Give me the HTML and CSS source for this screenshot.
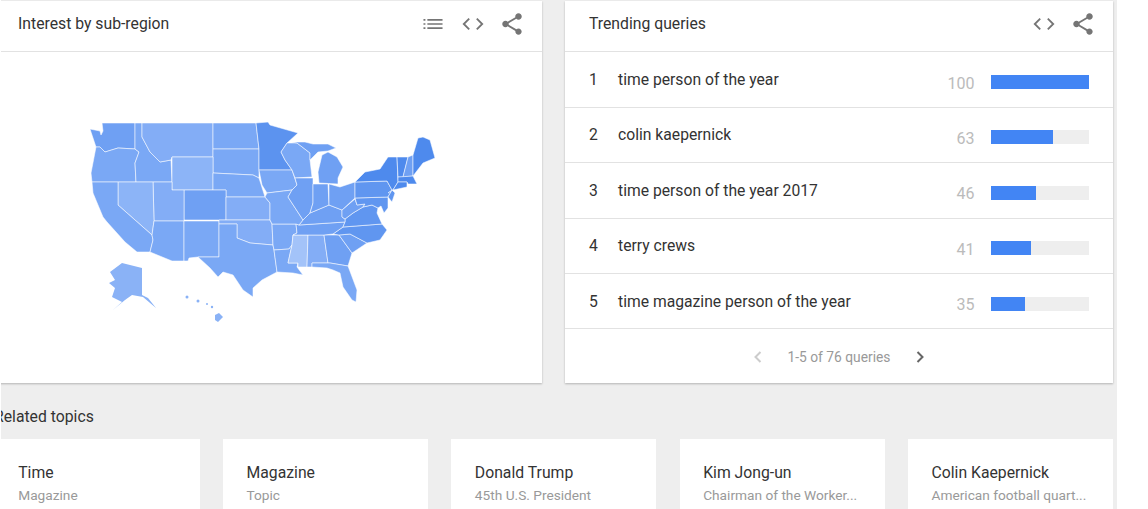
FILE: index.html
```html
<!DOCTYPE html>
<html lang="en">
<head>
<meta charset="utf-8">
<title>Interest by sub-region</title>
<link rel="stylesheet" href="styles.css">
</head>
<body>
<main class="page">
<div class="inner">
  <section class="panels">
    <article class="card">
      <header class="card-head">
        <h2 class="card-title">Interest by sub-region</h2>
        <svg class="icon" viewBox="0 0 24 24"><path d="M3.2 7.3h1.8v1.6H3.2zM6.8 7.3h14v1.6h-14zM3.2 11.2h1.8v1.6H3.2zM6.8 11.2h14v1.6h-14zM3.2 15.1h1.8v1.6H3.2zM6.8 15.1h14v1.6h-14z"/></svg>
        <svg class="icon" viewBox="0 0 24 24"><path class="line" d="M8.5 7 3.5 12l5 5M15.5 7l5 5-5 5"/></svg>
        <svg class="icon" viewBox="0 0 24 24"><path d="M18 16.08c-.76 0-1.44.3-1.96.77L8.91 12.7c.05-.23.09-.46.09-.7s-.04-.47-.09-.7l7.05-4.11c.54.5 1.25.81 2.04.81 1.66 0 3-1.34 3-3s-1.34-3-3-3-3 1.34-3 3c0 .24.04.47.09.7L8.04 9.81C7.5 9.31 6.79 9 6 9c-1.66 0-3 1.34-3 3s1.34 3 3 3c.79 0 1.5-.31 2.04-.81l7.12 4.16c-.05.21-.08.43-.08.65 0 1.61 1.31 2.92 2.92 2.92s2.92-1.31 2.92-2.92-1.31-2.92-2.92-2.92z"/></svg>
      </header>
      <svg class="map" viewBox="85 115 360 215" role="img" aria-label="Map of the United States">
        <g class="states">
          <polygon class="c3" points="90,129 100,131 101,135 103,131 102,123 135,123 135,149 118,148 105,152 100,147 96,147 93,138"/>
          <polygon class="c2" points="96,147 100,147 105,152 118,148 135,149 139,152 135,163 136,182 92,182 91,173"/>
          <polygon class="c2" points="135,123 142,123 142,137 150,152 160,162 171,160 172,182 136,182 135,163 139,152 135,149"/>
          <polygon class="c1" points="142,123 213,123 213,157 172,157 171,160 160,162 150,152 142,137"/>
          <polygon class="c2" points="213,123 256,123 259,149 213,149"/>
          <polygon class="c2" points="213,149 259,149 259,178 253,175 213,173"/>
          <polygon class="c0" points="172,157 213,157 213,190 172,190"/>
          <polygon class="c2" points="213,173 253,175 259,178 265,197 226,197 226,190 213,190"/>
          <polygon class="c3" points="184,190 226,190 226,220 184,220"/>
          <polygon class="c1" points="226,197 265,197 270,203 270,220 226,220"/>
          <polygon class="c1" points="153,182 172,182 172,190 184,190 184,221 154,221"/>
          <polygon class="c0" points="118,182 153,182 154,221 152,235 118,205"/>
          <polygon class="c2" points="92,182 118,182 118,205 152,235 153,240 150,252 137,252 125,242 107,222 103,217 93,193"/>
          <polygon class="c2" points="154,221 184,221 184,261 172,261 150,252 153,240 152,235"/>
          <polygon class="c2" points="184,221 219,221 219,257 198,257 189,258 188,261 184,261"/>
          <polygon class="c1" points="219,220 270,220 272,224 273,245 250,243 237,238 237,224 219,224"/>
          <polygon class="c2" points="219,224 237,224 237,238 250,243 273,245 274,250 277,272 262,280 253,288 253,297 243,290 233,275 223,272 218,277 210,268 198,257 219,257"/>
          <polygon class="c2" points="272,224 296,224 297,233 293,235 292,245 289,249 274,250 273,245"/>
          <polygon class="c2" points="274,250 289,249 292,245 288,263 298,263 297,267 303,275 293,273 277,272"/>
          <polygon class="c0b" points="293,235 308,235 307,267 298,267 298,263 288,263 292,245"/>
          <polygon class="c1" points="308,235 324,235 328,263 312,263 312,267 307,267"/>
          <polygon class="c3" points="324,235 339,235 352,253 348,266 330,263 328,263"/>
          <polygon class="c2" points="312,263 328,263 330,263 348,266 357,290 356,302 352,300 343,287 340,273 333,270 327,268 312,267"/>
          <polygon class="c3" points="339,235 350,234 367,243 352,253"/>
          <polygon class="c4" points="333,234 343,227 382,224 387,230 380,240 367,243 350,234 339,235"/>
          <polygon class="c3" points="296,224 299,225 345,222 343,227 333,234 324,235 293,235 297,233"/>
          <polygon class="c4" points="345,222 345,219 353,213 363,207 372,205 378,208 377,213 382,224 343,227"/>
          <polygon class="c3" points="299,225 303,220 310,213 329,205 342,210 342,217 345,219 345,222"/>
          <polygon class="c3" points="342,210 355,199 357,205 365,204 363,207 353,213 345,219 342,217"/>
          <polygon class="c4" points="355,198 388,197 388,208 384,213 381,206 378,208 372,205 363,207 365,204 357,205"/>
          <polygon class="c4b" points="256,123 268,122 270,125 298,133 287,143 281,152 285,160 292,170 259,170 259,149"/>
          <polygon class="c2" points="259,170 292,170 297,185 292,190 267,193 262,185"/>
          <polygon class="c2" points="265,197 267,193 292,190 288,197 303,220 299,225 296,224 272,224 270,220 270,203"/>
          <polygon class="c2" points="287,143 297,143 310,153 310,160 312,177 295,178 292,170 285,160 281,152"/>
          <polygon class="c3" points="292,142 305,142 313,144 328,144 336,148 328,151 318,152 310,160 310,153 297,143"/>
          <polygon class="c3" points="319,183 318,172 322,155 328,152 337,157 343,167 338,178 338,184"/>
          <polygon class="c3" points="295,178 313,178 313,203 310,213 303,220 288,197 292,190 297,185"/>
          <polygon class="c3" points="313,184 328,184 329,205 310,213 313,203"/>
          <polygon class="c3" points="329,184 340,187 355,182 355,198 342,210 329,205"/>
          <polygon class="c4" points="355,182 387,181 392,190 388,197 355,198"/>
          <polygon class="c5" points="355,182 365,172 380,169 388,157 397,157 398,182 393,190 397,187 388,193 392,190 387,181"/>
          <polygon class="c5" points="397,157 408,157 403,177 398,177"/>
          <polygon class="c3" points="408,157 413,155 413,176 403,177"/>
          <polygon class="c5" points="413,155 418,138 423,137 430,140 435,158 423,163 413,176"/>
          <polygon class="c5" points="398,177 413,176 417,184 408,184 407,182 398,182"/>
          <polygon class="c5" points="398,182 407,182 407,187 393,190"/>
          <polygon class="c4" points="392,190 395,193 392,202 388,197"/>
        </g>
        <g class="islands">
          <polygon points="122,263 142,268 142,295 148,298 156,308 143,297 132,295 125,300 113,310 122,302 112,297 115,288 109,283 115,280 110,272"/>
          <polygon points="215,315 219,313 223,317 218,322 215,320"/>
          <circle cx="187" cy="297" r="1.5"/>
          <circle cx="198" cy="301" r="1.5"/>
          <circle cx="207" cy="304" r="1"/>
          <circle cx="212" cy="307" r="1.2"/>
        </g>
      </svg>
    </article>

    <article class="card">
      <header class="card-head">
        <h2 class="card-title">Trending queries</h2>
        <svg class="icon" viewBox="0 0 24 24"><path class="line" d="M8.5 7 3.5 12l5 5M15.5 7l5 5-5 5"/></svg>
        <svg class="icon" viewBox="0 0 24 24"><path d="M18 16.08c-.76 0-1.44.3-1.96.77L8.91 12.7c.05-.23.09-.46.09-.7s-.04-.47-.09-.7l7.05-4.11c.54.5 1.25.81 2.04.81 1.66 0 3-1.34 3-3s-1.34-3-3-3-3 1.34-3 3c0 .24.04.47.09.7L8.04 9.81C7.5 9.31 6.79 9 6 9c-1.66 0-3 1.34-3 3s1.34 3 3 3c.79 0 1.5-.31 2.04-.81l7.12 4.16c-.05.21-.08.43-.08.65 0 1.61 1.31 2.92 2.92 2.92s2.92-1.31 2.92-2.92-1.31-2.92-2.92-2.92z"/></svg>
      </header>
      <ol class="rows">
        <li class="row"><span class="rank">1</span><span class="query">time person of the year</span><span class="value">100</span><span class="bar"><span class="fill" style="width:100%"></span></span></li>
        <li class="row"><span class="rank">2</span><span class="query">colin kaepernick</span><span class="value">63</span><span class="bar"><span class="fill" style="width:63%"></span></span></li>
        <li class="row"><span class="rank">3</span><span class="query">time person of the year 2017</span><span class="value">46</span><span class="bar"><span class="fill" style="width:46%"></span></span></li>
        <li class="row"><span class="rank">4</span><span class="query">terry crews</span><span class="value">41</span><span class="bar"><span class="fill" style="width:41%"></span></span></li>
        <li class="row"><span class="rank">5</span><span class="query">time magazine person of the year</span><span class="value">35</span><span class="bar"><span class="fill" style="width:35%"></span></span></li>
      </ol>
      <footer class="pager">
        <svg class="chev chev-off" viewBox="0 0 10 14"><path d="M7.5 2 2.5 7l5 5"/></svg>
        <span class="pager-text">1-5 of 76 queries</span>
        <svg class="chev" viewBox="0 0 10 14"><path d="M2.5 2l5 5-5 5"/></svg>
      </footer>
    </article>
  </section>

  <h2 class="section-title">Related topics</h2>
  <section class="topics">
    <article class="topic"><div class="topic-name">Time</div><div class="topic-sub">Magazine</div></article>
    <article class="topic"><div class="topic-name">Magazine</div><div class="topic-sub">Topic</div></article>
    <article class="topic"><div class="topic-name">Donald Trump</div><div class="topic-sub">45th U.S. President</div></article>
    <article class="topic"><div class="topic-name">Kim Jong-un</div><div class="topic-sub">Chairman of the Worker...</div></article>
    <article class="topic"><div class="topic-name">Colin Kaepernick</div><div class="topic-sub">American football quart...</div></article>
  </section>
</div>
</main>
</body>
</html>
```
FILE: styles.css
```css
* { box-sizing: border-box; }
html, body { margin: 0; padding: 0; height: 100%; background: #fff; overflow: hidden; }
body { font-family: Roboto, "Liberation Sans", sans-serif; color: #333; }
.page { width: 1116px; height: 509px; margin: 0 0 0 1px; padding-top: 1px; background: #eee; overflow: hidden; }
.inner { width: 1119px; margin-left: -7px; }
.panels { display: grid; grid-template-columns: 1fr 1fr; gap: 23px; }
.card { height: 382px; background: #fff; box-shadow: 0 1px 2px rgba(0,0,0,.25); }
.card-head { height: 51px; display: flex; align-items: center; gap: 13.5px; padding: 0 17px 5px 24px; border-bottom: 1px solid #e2e2e2; }
.card-title { flex: 1; margin: 0; font-size: 15.75px; font-weight: 400; color: #333; }
.icon { width: 26px; height: 26px; fill: #757575; flex: none; }
.icon .line { fill: none; stroke: #757575; stroke-width: 1.7; }
.map { display: block; width: 360px; height: 215px; margin: 63px 0 0 91px; filter: blur(.35px); }
.states polygon { stroke: rgba(255,255,255,.6); stroke-width: .9; stroke-linejoin: round; }
.islands { fill: #8ab2f6; }
.c0 { fill: #8cb4f7; }
.c0b { fill: #a3c3f9; }
.c1 { fill: #83adf6; }
.c2 { fill: #7aa8f5; }
.c3 { fill: #6fa0f3; }
.c4 { fill: #6096f0; }
.c4b { fill: #5c93ef; }
.c5 { fill: #4e8aed; }
.rows { list-style: none; margin: 0; padding: .4px 0 0; }
.row { height: 55.4px; display: flex; align-items: center; padding: 0 24px; border-bottom: 1px solid #e2e2e2; font-size: 15.7px; }
.rank { width: 29px; }
.query { flex: 1; }
.value { width: 60px; text-align: right; color: #bbb; margin-right: 16px; padding-top: 7px; font-size: 16px; }
.bar { display: block; width: 98.5px; height: 14px; margin-top: 5px; background: #eee; }
.fill { display: block; height: 100%; background: #4285f4; }
.pager { height: 53px; display: flex; align-items: center; justify-content: center; gap: 24.5px; padding-top: 2px; }
.pager-text { font-size: 13.8px; color: #999; }
.chev { width: 10px; height: 14px; fill: none; stroke: #666; stroke-width: 2; }
.chev-off { stroke: #ccc; }
.section-title { margin: 24px 0 0; height: 32px; font-size: 15.75px; font-weight: 400; color: #333; line-height: 19px; }
.topics { display: grid; grid-template-columns: repeat(5, 1fr); gap: 23.33px; margin-left: .7px; }
.topic { height: 90px; background: #fff; padding: 24px 24px 0 23.5px; white-space: nowrap; }
.topic-name { font-size: 15.75px; line-height: 20px; color: #333; }
.topic-sub { font-size: 13.7px; line-height: 18px; margin-top: 3px; color: #999; }
```
